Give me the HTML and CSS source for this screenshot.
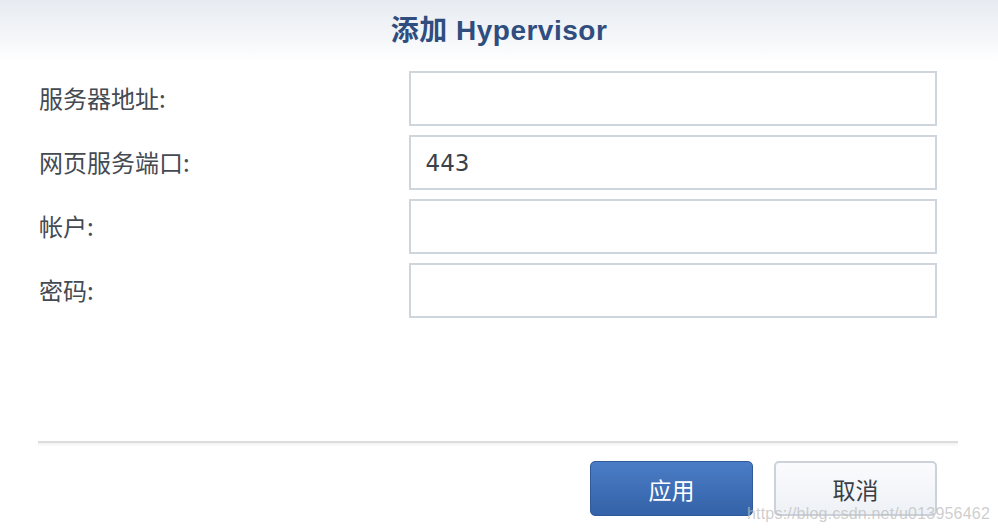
FILE: index.html
```html
<!DOCTYPE html>
<html lang="zh">
<head>
<meta charset="utf-8">
<title>添加 Hypervisor</title>
<link rel="stylesheet" href="styles.css">
</head>
<body>
<div class="dialog">
  <header class="header">
    <h1 class="title">添加 Hypervisor</h1>
  </header>
  <form class="form">
    <div class="row">
      <label class="label">服务器地址:</label>
      <div class="input"></div>
    </div>
    <div class="row">
      <label class="label">网页服务端口:</label>
      <div class="input">443</div>
    </div>
    <div class="row">
      <label class="label">帐户:</label>
      <div class="input"></div>
    </div>
    <div class="row">
      <label class="label">密码:</label>
      <div class="input"></div>
    </div>
  </form>
  <div class="separator"></div>
  <footer class="footer">
    <button class="btn btn-primary" type="button">应用</button>
    <button class="btn btn-default" type="button">取消</button>
  </footer>
  <div class="watermark">https://blog.csdn.net/u013956462</div>
</div>
</body>
</html>
```

FILE: styles.css
```css
* { box-sizing: border-box; }
html, body {
  margin: 0;
  padding: 0;
  background: #ffffff;
}
body {
  width: 998px;
  height: 532px;
  overflow: hidden;
  font-family: "Noto Sans CJK SC", "DejaVu Sans", sans-serif;
}
.dialog {
  position: relative;
  width: 998px;
  height: 532px;
  display: flex;
  flex-direction: column;
}
.header {
  height: 62px;
  background: linear-gradient(to bottom, #e7ebf1 0%, #f3f5f8 55%, #ffffff 100%);
  display: flex;
  align-items: center;
  justify-content: center;
}
.title {
  margin: 0;
  font-family: "Liberation Sans", "Noto Sans CJK SC", sans-serif;
  font-weight: bold;
  font-size: 28px;
  color: #2f4d7e;
  letter-spacing: 0.5px;
  line-height: 1;
}
.form {
  margin: 0;
  padding: 9px 61px 0 39px;
  display: flex;
  flex-direction: column;
  gap: 9px;
}
.row {
  display: flex;
  align-items: center;
  height: 55px;
}
.label {
  width: 370px;
  font-size: 24px;
  color: #444a52;
  font-family: "Noto Sans CJK SC", sans-serif;
  line-height: 1;
  padding-bottom: 2px;
}
.input {
  width: 529px;
  height: 55px;
  border: 2px solid #cfd5dc;
  background: #ffffff;
  padding: 0 15px;
  display: flex;
  align-items: center;
  font-family: "DejaVu Sans", sans-serif;
  font-size: 23px;
  color: #3b4148;
}
.separator {
  margin: 123px 40px 0 38px;
  height: 6px;
  border-top: 2px solid #dddddd;
  background: linear-gradient(to bottom, #f1f1f1, #ffffff);
}
.footer {
  display: flex;
  justify-content: flex-end;
  gap: 21px;
  padding: 14px 61px 0 0;
}
.btn {
  width: 163px;
  height: 55px;
  border-radius: 5px;
  font-family: "Noto Sans CJK SC", sans-serif;
  font-size: 23px;
  display: flex;
  align-items: center;
  justify-content: center;
  padding: 0;
  cursor: pointer;
}
.btn-primary {
  background: linear-gradient(to bottom, #4a7dc6 0%, #3f6fb7 50%, #3462a8 100%);
  border: 1px solid #2f5998;
  color: #ffffff;
}
.btn-default {
  background: linear-gradient(to bottom, #fafbfd 0%, #eef1f6 100%);
  border: 2px solid #cdd2da;
  color: #3a3f46;
}
.watermark {
  position: absolute;
  right: 8px;
  bottom: 9px;
  font-family: "Liberation Sans", sans-serif;
  font-size: 16px;
  color: rgba(190, 190, 190, 0.75);
  letter-spacing: 0.2px;
  pointer-events: none;
}
```
